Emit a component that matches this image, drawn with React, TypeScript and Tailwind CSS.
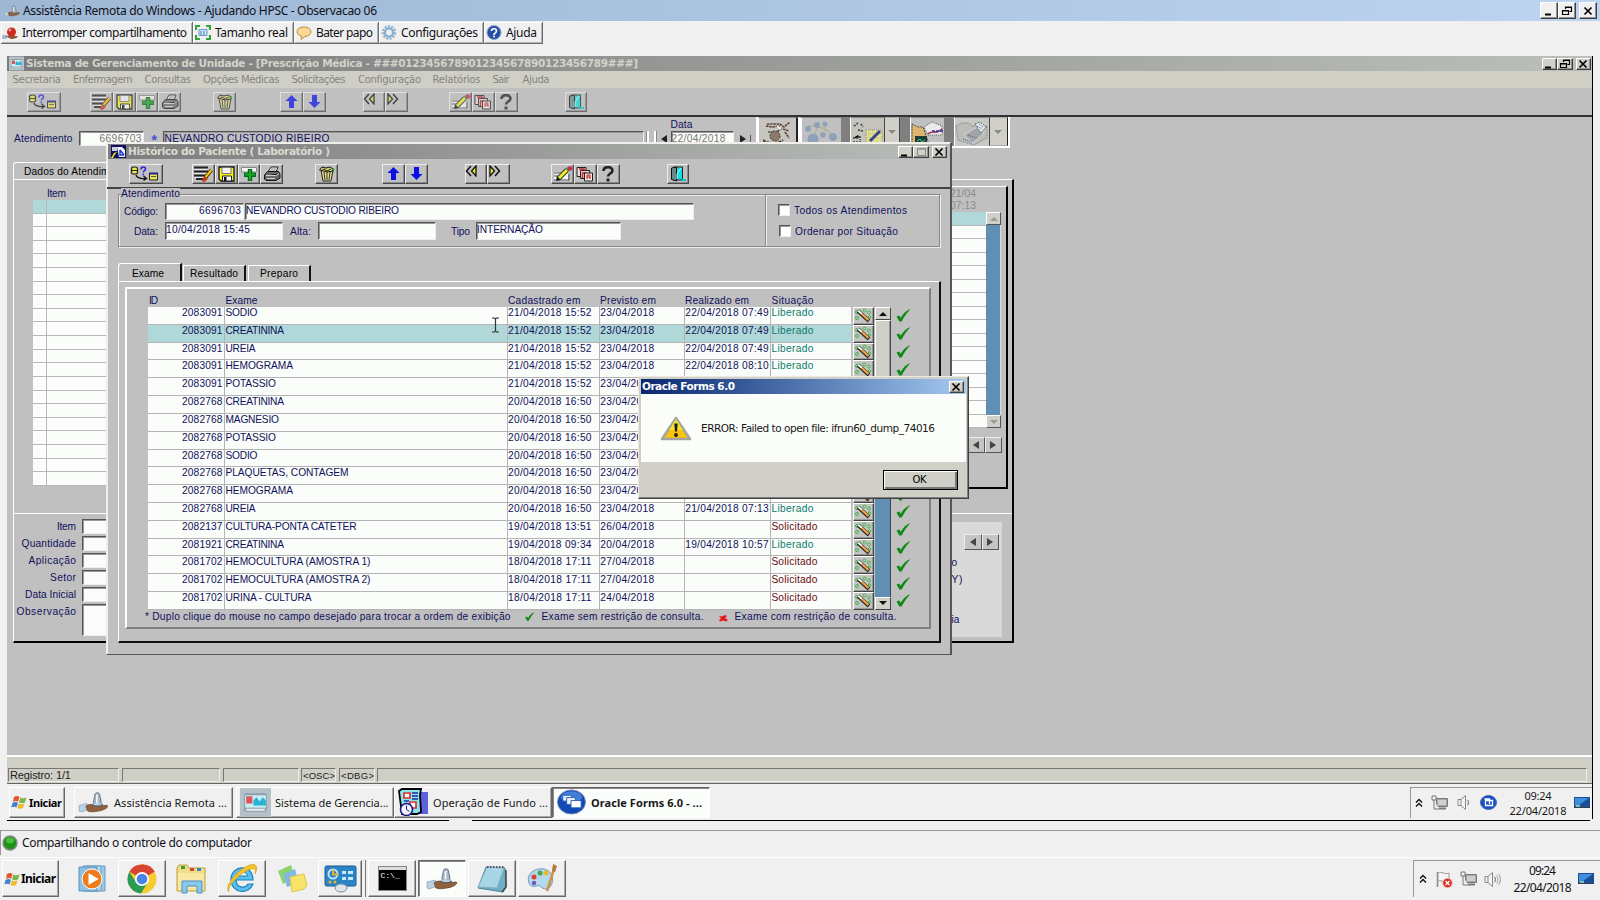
import { useLayoutEffect, useRef, useState } from "react";
import type { ReactNode } from "react";

const SYS = "font-['Liberation_Sans',sans-serif] text-[10.200px] leading-[11px] text-[#10105c]";
const VERD = "font-['DejaVu_Sans',Verdana,sans-serif]";
const SEG = "font-['Noto_Sans',sans-serif] text-[12px] leading-none text-[#101018]";

/* Spreads the letters of a label over a given width. */
function Fit({ w, children, className = "" }: { w: number; children: string; className?: string }) {
  const ref = useRef<HTMLSpanElement>(null);
  const [gap, setGap] = useState(0);
  useLayoutEffect(() => {
    if (!ref.current) return;
    const r = document.createRange();
    r.selectNodeContents(ref.current);
    const natural = r.getBoundingClientRect().width;
    setGap((w - natural) / Math.max(1, children.length - 1));
  }, [w, children]);
  return (
    <span ref={ref} className={"inline-block shrink-0 whitespace-pre " + className} style={{ width: w, letterSpacing: gap }}>
      {children}
    </span>
  );
}

/* ---------- toolbar icons ---------- */
const S = ({ w, h, vb, children }: { w: number; h: number; vb?: string; children: ReactNode }) => (
  <svg width={w} height={h} viewBox={vb ?? `0 0 ${w} ${h}`} className="block shrink-0">{children}</svg>
);
const IcQuery = () => (
  <S w={29} h={16}>
    <path d="M1.500 2.500c0-2 6-2 6 0v4c0 2-6 2-6 0z" fill="#e8e84a" stroke="#222" strokeWidth="1.200" /><path d="M1.500 4.500h6" stroke="#222" />
    <path d="M11 3.500c0-3.500 4.500-3 4.500-.5 0 1.800-2.200 1.500-2.200 3.500M12.500 8.500h1.600" fill="none" stroke="#2424e0" strokeWidth="1.500" />
    <path d="M6 9c1 3 4 4 10 3.500M13.500 10l3 2.500-3 2" fill="none" stroke="#111" strokeWidth="1.300" />
    <path d="M19.500 7.500h8v6.500h-8z" fill="#e8e84a" stroke="#222" /><path d="M19 7.500h9" stroke="#20208c" strokeWidth="2" /><path d="M21 10.500h5" stroke="#555" />
  </S>
);
const IcEdit = () => (
  <S w={20} h={16}>
    <path d="M1 1.500h14M1 5.500h14M1 9.500h12M3 13h8" stroke="#222" strokeWidth="1.900" /><path d="M1 3.500h14M1 7.500h13M2 11.500h9" stroke="#eee" />
    <path d="M18.500 4L12 12" stroke="#5a3008" strokeWidth="3.800" /><path d="M18.500 4L12.500 11" stroke="#f0c818" strokeWidth="2" />
    <path d="M8.500 15l2.500-4.500 4 2.500-3.500 3z" fill="#c83a18" />
  </S>
);
const IcSave = () => (
  <S w={17} h={16}>
    <path d="M1 1h15v14H3l-2-2z" fill="#f4f01c" stroke="#111" strokeWidth="1.300" /><path d="M4 1.500h9v6H4z" fill="#f4f4f4" stroke="#777" />
    <path d="M4.500 10h9v5h-9z" fill="#fff" stroke="#222" /><path d="M6 11h2.500v4H6z" fill="#111" />
  </S>
);
const IcInsert = () => (
  <S w={18} h={16}>
    <path d="M1.500 1.500h15v4.500h-15z" fill="#f4f4f4" stroke="#888" />
    <path d="M10 3v12M4 8.800h12" stroke="#056a14" strokeWidth="4.400" /><path d="M10 4v10M5 8.500h10" stroke="#18a828" strokeWidth="2" />
  </S>
);
const IcPrint = () => (
  <S w={18} h={16}>
    <path d="M5 6l3-5h7l-2 5z" fill="#f2f2f2" stroke="#222" /><path d="M8 3h5M7 5h5" stroke="#888" />
    <path d="M1.500 9l3-3.500h11L17 8v4l-4 2.500H3L1.500 13z" fill="#6a6a6a" stroke="#111" />
    <path d="M3 9.500h10l3-2M4 12.500h8" stroke="#ccc" />
  </S>
);
const IcTrash = () => (
  <S w={17} h={16}>
    <path d="M3 4h12l-2 11H5z" fill="#e6e08a" stroke="#222" /><path d="M6 6l1 8M9 6v8M12 6l-1 8" stroke="#333" />
    <path d="M1.500 4L4 1l4 1 4-1 3 2v2l-6 1z" fill="#d8d47a" stroke="#111" /><path d="M3 5l3-2 3 2 4-2" stroke="#222" fill="none" /><path d="M13 2l3 1-1 3" stroke="#1c8a1c" fill="none" />
  </S>
);
const IcUp = () => <S w={15} h={15}><path d="M7.500 1l6 6h-3.500v7h-5V7H1.500z" fill="#0a10e8" /></S>;
const IcDown = () => <S w={15} h={15}><path d="M7.500 14l6-6h-3.500V1h-5v7H1.500z" fill="#0a10e8" /></S>;
const IcPrev = () => <S w={14} h={12}><path d="M6 1L1.500 6 6 11" fill="none" stroke="#111" strokeWidth="1.500" /><path d="M11 1L6.500 6l4.500 5z" fill="#eaea30" stroke="#111" strokeWidth="1.300" /></S>;
const IcNext = () => <S w={14} h={12}><path d="M2 1l4.500 5L2 11z" fill="#eaea30" stroke="#111" strokeWidth="1.300" /><path d="M7 1l4.500 5L7 11" fill="none" stroke="#111" strokeWidth="1.500" /></S>;
const IcPencil = () => (
  <S w={20} h={16}>
    <path d="M1 6h14v9H1z" fill="#f6f6f6" /><path d="M1 7h8M1 10h5M1 14h15V8" stroke="#444" fill="none" />
    <path d="M5 13L14 4" stroke="#333" strokeWidth="5" /><path d="M6 12L14 4" stroke="#f0ec28" strokeWidth="3" />
    <path d="M3 15l1-4 3 3z" fill="#111" /><path d="M14 4l3-2" stroke="#2a9c40" strokeWidth="4" /><circle cx="17" cy="2.500" r="2.300" fill="#e0204c" />
  </S>
);
const IcStack = () => (
  <S w={18} h={16}>
    <path d="M1 1.500h9v9H1z" fill="#eed8d8" stroke="#222" /><path d="M3 3h5v6" stroke="#c01c1c" fill="none" strokeWidth="1.500" />
    <path d="M4.500 4.500h9v8h-9z" fill="#eed8d8" stroke="#222" /><path d="M6.500 12V7h4" stroke="#c01c1c" fill="none" strokeWidth="1.500" />
    <path d="M8.500 7h8v8h-8z" fill="#f6e4e4" stroke="#222" /><path d="M11 13V9h3v4M11 11h3" stroke="#c01c1c" fill="none" />
  </S>
);
const IcHelp = () => <S w={14} h={16}><path d="M2.500 5C2.500 0 11.500 0 11.500 4.500c0 3-4.500 3-4.500 6" fill="none" stroke="#222" strokeWidth="2.600" /><path d="M5.500 12.500h3v3h-3z" fill="#222" /></S>;
const IcDoor = () => (
  <S w={16} h={16}>
    <path d="M3.500 1h9v13h-9z" fill="#12dfe2" stroke="#222" /><path d="M1.500 2l5-1v14l-5-1.500z" fill="#6a8a8a" stroke="#111" />
    <path d="M11 2l-4 6v5" stroke="#bff" fill="none" /><path d="M12 14h4" stroke="#0cc" strokeWidth="2" />
  </S>
);

function Btn({ wide, children }: { wide?: boolean; children: ReactNode }) {
  return <div className={(wide ? "w-[34px]" : "w-[22.800px]") + " flex h-[20px] shrink-0 items-center justify-center border border-t-[#ededed] border-l-[#ededed] border-r-[#4a4a4a] border-b-[#4a4a4a] shadow-[inset_-1px_-1px_0_#8a8a8a]"}>{children}</div>;
}

function ToolStrip() {
  return (
    <div className="flex items-center">
      <Btn wide><div className="-ml-[3px]"><IcQuery /></div></Btn>
      <div className="ml-[29px] flex"><Btn><IcEdit /></Btn><Btn><IcSave /></Btn><Btn><IcInsert /></Btn><Btn><IcPrint /></Btn></div>
      <div className="ml-[32px] flex"><Btn><IcTrash /></Btn></div>
      <div className="ml-[44px] flex"><Btn><IcUp /></Btn><Btn><IcDown /></Btn></div>
      <div className="ml-[37px] flex"><Btn><div className="-mt-[5px] -ml-[7px]"><IcPrev /></div></Btn><Btn><div className="-mt-[5px] -ml-[7px]"><IcNext /></div></Btn></div>
      <div className="ml-[41px] flex"><Btn><IcPencil /></Btn><Btn><IcStack /></Btn><Btn><IcHelp /></Btn></div>
      <div className="ml-[47px] flex"><Btn><IcDoor /></Btn></div>
    </div>
  );
}

/* ---------- window buttons ---------- */
const WinGlyph = ({ k, dim }: { k: "min" | "restore" | "max" | "close"; dim?: boolean }) => (
  <S w={12} h={10}>
    {k === "min" && <path d="M2 8.500h6" stroke="#000" strokeWidth="2" />}
    {k === "restore" && <path d="M4.500 3V1h6v4.500h-2M4 1.500h7M1.500 4.500h6v4h-6zM1 5h7" fill="none" stroke="#000" strokeWidth="1.200" />}
    {k === "max" && <path d="M2.500 1.500h8v7h-8zM2 2h9" fill="none" stroke={dim ? "#8a8a86" : "#000"} />}
    {k === "close" && <path d="M2.500 1.500l7 7M9.500 1.500l-7 7" stroke="#000" strokeWidth="1.700" />}
  </S>
);
function WinBtn({ k, big, dim }: { k: "min" | "restore" | "max" | "close"; big?: boolean; dim?: boolean }) {
  return (
    <div className={(big ? "h-[17px] w-[18px] bg-[#f0f0f0]" : "h-[12px] w-[15.500px] bg-[#d0cfc8]") + " flex items-center justify-center border border-t-white border-l-white border-r-[#404040] border-b-[#404040] shadow-[inset_-1px_-1px_0_#909090]"}>
      <WinGlyph k={k} dim={dim} />
    </div>
  );
}

/* ---------- shared application icons ---------- */
const AppIcon = ({ s }: { s: number }) => (
  <S w={s} h={s} vb="0 0 30 28">
    <rect width="30" height="28" fill="#b4c2c8" /><rect x="4" y="5" width="22" height="18" rx="2" fill="#8d9da8" />
    <rect x="5" y="7" width="20" height="12" fill="#c8f0f4" /><rect x="6" y="8" width="6" height="7" fill="#e2525e" />
    <path d="M13 17v-5l3-3 3 4 3-4 3 3v5z" fill="#28b4d0" /><path d="M6 21h18" stroke="#e8eef2" strokeWidth="2" />
  </S>
);
const HandIcon = ({ w, h }: { w: number; h: number }) => (
  <S w={w} h={h} vb="0 0 32 22">
    <path d="M1 14l8-2 3 6-9 3-2-1z" fill="#b6d2e4" stroke="#7c98ac" strokeWidth=".6" />
    <path d="M8 15c3-3 8-2 10 0l12-1c3 1-2 5-9 6-5 1-9 1-11 0z" fill="#94603c" stroke="#5e3a20" strokeWidth=".7" />
    <path d="M17.500 3c0-3 5-3 5 0l1.500 7c1 4-9 4-8 0z" fill="#a9b6c4" stroke="#4e5f70" strokeWidth=".8" /><path d="M19.500 3v9" stroke="#f2f6fa" strokeWidth="1.800" />
    <path d="M14 13.500c0-2.500 12-2.500 12 0s-12 2.500-12 0z" fill="#53657a" /><path d="M15.500 12.800c0-1.700 9-1.700 9 0s-9 1.600-9 0z" fill="#c4ced8" />
  </S>
);
const Flag = () => (
  <S w={17} h={16}>
    <path d="M3 3c2-1.500 4-1.500 5.500 0L7 8C5.500 6.800 4 6.800 2 8z" fill="#e4562c" />
    <path d="M9.500 3.500c2 1.200 4 1 6 0L14 8.500c-2 1-4 1-6 0z" fill="#7ab648" />
    <path d="M1.600 9c2-1.200 4-1.200 5.300 0l-1.500 4.500C4 12.500 2 12.500.3 13.500z" fill="#3f7fd0" />
    <path d="M7.800 9.500c2 1 4 1 5.800 0L12 14c-2 1-4 1-5.600 0z" fill="#f0b82c" />
  </S>
);
const Net = () => (
  <S w={17} h={16}>
    <path d="M5.500 3.500h11v8h-11z" fill="#a8a8a8" stroke="#787878" /><path d="M7 5h8v5H7z" fill="#cfcfcf" />
    <path d="M8 13.500h7" stroke="#787878" strokeWidth="2" /><path d="M1 1h4v4H1zM3 5v9h5" fill="#f0f0f0" stroke="#777" />
  </S>
);
const Speaker = ({ waves }: { waves: number }) => (
  <S w={17} h={15}>
    <path d="M1 4.500h3l4.500-4v14l-4.500-4H1z" fill="#f4f4f4" stroke="#888" /><path d="M4 4.500v6" stroke="#888" />
    <path d="M10.500 5c1.400 1.300 1.400 3.700 0 5" fill="none" stroke="#888" strokeWidth="1.200" />
    {waves > 1 && <path d="M12.500 3.500c2 2 2 6 0 8M14.500 2c2.500 3 2.500 8 0 11" fill="none" stroke="#999" />}
  </S>
);
const Monitor = () => <S w={16} h={12}><path d="M0 0h16v10H0z" fill="#1b4e96" /><path d="M1 1h14L5 8 1 9z" fill="#3f8fdc" /><path d="M0 10.500h16" stroke="#304050" /><path d="M2 9h4" stroke="#9fe0b0" strokeWidth="1.500" /></S>;
const Chevrons = () => <S w={8} h={10}><path d="M1 4.500L4 1.500l3 3M1 8.500l3-3 3 3" fill="none" stroke="#111" strokeWidth="1.400" /></S>;
const FormsIcon = ({ w, h }: { w: number; h: number }) => (
  <S w={w} h={h} vb="0 0 30 26">
    <ellipse cx="15" cy="13" rx="14.500" ry="12.500" fill="#1248b4" stroke="#7c92b8" /><ellipse cx="15" cy="8" rx="11" ry="6" fill="#5a96e4" opacity=".7" />
    <path d="M6 6h9v6H6z" fill="#e8f0fc" stroke="#2c60b8" strokeWidth="1" /><path d="M10 8.500h9v7h-9z" fill="#f2f6fe" stroke="#2c60b8" strokeWidth="1" />
    <path d="M14.500 11.500H25v7.500H14.500z" fill="#fff" stroke="#2c60b8" strokeWidth="1" />
  </S>
);
const FormsIconSmall = () => (
  <S w={17} h={15}>
    <ellipse cx="8.500" cy="7.500" rx="8" ry="7" fill="#1a50c4" stroke="#4468b0" /><path d="M4.500 4h5v5M5.500 5.500h7v5h-7z" fill="none" stroke="#fff" strokeWidth="1.300" />
  </S>
);
const Check = ({ w, h }: { w: number; h: number }) => <S w={w} h={h} vb="0 0 15 14"><path d="M0 8l3-1 1.500 2.500C7 5 10 2 15 0 11 4 8 9 5.500 13.500H3z" fill="#0c8a12" /></S>;
const Tri = ({ d, c = "#111" }: { d: "u" | "d" | "l" | "r"; c?: string }) => (
  <S w={8} h={8}><path d={d === "u" ? "M0 6l4-4 4 4z" : d === "d" ? "M0 2l4 4 4-4z" : d === "l" ? "M7 0v8L1 4z" : "M1 0v8l6-4z"} fill={c} /></S>
);
const Wand = () => (
  <S w={18} h={15}>
    <g fill="none" stroke="#3cb84c" strokeWidth="1"><circle cx="3" cy="4" r="1.500" /><circle cx="10.500" cy="2.500" r="1.500" /><circle cx="15" cy="4.500" r="1.500" /><circle cx="3" cy="10" r="1.500" /><circle cx="15.500" cy="9" r="1.200" /></g>
    <path d="M4 3l11 10" stroke="#33302a" strokeWidth="3.800" /><path d="M4.300 2.800L8 6" stroke="#fff" strokeWidth="1.800" /><path d="M8 6l6.500 6" stroke="#f2a448" strokeWidth="2.300" />
  </S>
);

/* ---------- outer session window ---------- */
function OuterTop() {
  const b = "flex h-[22px] items-center border-r border-b border-r-[#6c6c6c] border-b-[#6c6c6c] shadow-[inset_1px_1px_0_#fff,inset_-1px_-1px_0_#b4b4b4]";
  return (
    <>
      <header className="flex h-[21px] items-center justify-between bg-linear-to-r from-[#9db7d4] to-[#bcd4ef] pr-[3px] pl-[4px]">
        <div className="flex items-center gap-[3px]"><HandIcon w={16} h={12} /><Fit w={354} className={SEG}>Assistência Remota do Windows - Ajudando HPSC - Observacao 06</Fit></div>
        <div className="flex"><WinBtn k="min" big /><WinBtn k="restore" big /><div className="ml-[3px]"><WinBtn k="close" big /></div></div>
      </header>
      <nav className="flex h-[35px] bg-[#f0f0f0] pt-px pl-px">
        <div className={b + " w-[192px] gap-[3px] pl-px"}>
          <S w={17} h={14}><path d="M0 9h5v4H0z" fill="#a4bfd6" /><path d="M3 10l12 0c2 1-2 3-6 3z" fill="#8a5634" /><circle cx="9.500" cy="6" r="4.500" fill="#cc2a22" /><circle cx="8" cy="4" r="1.500" fill="#f09088" /></S>
          <Fit w={165} className={SEG}>Interromper compartilhamento</Fit>
        </div>
        <div className={b + " w-[101px] gap-[4px] pl-[2px]"}>
          <S w={16} h={15}><path d="M1 5V1h4M11 1h4v4M15 10v4h-4M5 14H1v-4" fill="none" stroke="#30a838" strokeWidth="2.200" /><path d="M4 4.500h8v6H4z" fill="#cfe4f8" stroke="#6c9cc8" /><path d="M6 6v4M9 6v4" stroke="#4878b8" /></S>
          <Fit w={73} className={SEG}>Tamanho real</Fit>
        </div>
        <div className={b + " w-[85px] gap-[4px] pl-[2px]"}>
          <S w={16} h={14}><path d="M8 1c9 0 9 9 1 9.500L5 13.500l.5-3.500C-1 8.500-.5 1 8 1z" fill="#f9d894" stroke="#c08c38" /></S>
          <Fit w={57} className={SEG}>Bater papo</Fit>
        </div>
        <div className={b + " w-[105px] gap-[4px] pl-[2px]"}>
          <S w={16} h={15}><circle cx="8" cy="7.500" r="5.800" fill="none" stroke="#8db4d2" strokeWidth="3" strokeDasharray="2 1.200" /><circle cx="8" cy="7.500" r="4" fill="none" stroke="#88aecd" strokeWidth="2.200" /></S>
          <Fit w={77} className={SEG}>Configurações</Fit>
        </div>
        <div className={b + " w-[59px] gap-[4px] pl-[2px]"}>
          <S w={16} h={15}><circle cx="8" cy="7.500" r="7" fill="#2450a8" stroke="#8ea4cc" /><path d="M5.500 6c0-3 5-3 5 0 0 2-2.500 1.700-2.500 4" fill="none" stroke="#fff" strokeWidth="1.700" /><circle cx="8" cy="11.500" r="1" fill="#fff" /></S>
          <Fit w={31} className={SEG}>Ajuda</Fit>
        </div>
      </nav>
    </>
  );
}

/* ---------- background application ---------- */
const MENU: [string, number, number][] = [
  ["Secretaria", 48.5, 12], ["Enfermagem", 59.5, 12], ["Consultas", 46.5, 12], ["Opções Médicas", 76.5, 12], ["Solicitações", 54, 12.5],
  ["Configuração", 63, 11.5], ["Relatórios", 48, 12], ["Sair", 17, 13], ["Ajuda", 27, 0],
];
const SUNK = "border border-t-[#555] border-l-[#555] border-r-[#eee] border-b-[#eee] shadow-[inset_1px_1px_0_#999]";

function TopButtons() {
  const cell = "flex h-[29px] items-start justify-center overflow-hidden border-t border-l border-t-[#888] border-l-white pt-[3px]";
  const bar = "h-[29px] bg-[#7f7f7f]";
  return (
    <div className="flex h-[31px] w-[254px] border-r-2 border-b-2 border-white border-l-2">
      <div className={cell + " w-[40px] border-r-2 border-r-[#222] bg-[#c6c5c0]"}>
        <S w={28} h={26}>
          <path d="M4 3h13l4 3 6-5M3 5l6 1 8-1M5 11h9l5-4M20 8l6 2M22 11l4 6" stroke="#5c4438" strokeWidth="1.600" strokeDasharray="2.500 .7" fill="none" />
          <circle cx="12" cy="15" r="5" fill="#8a7a6c" stroke="#4a3e34" strokeDasharray="2 1" /><path d="M0 19c6 4 14 4 20 0M2 23h14" stroke="#4a3e34" strokeWidth="2" strokeDasharray="3 1" fill="none" /><path d="M14 5l4 3" stroke="#f4f0ea" strokeWidth="2" />
        </S>
      </div>
      <div className={cell + " w-[43px] border-l-4"}>
        <S w={34} h={24}><path d="M4 5h8l9 3 8 6M14 5l-5 12M21 3v7" stroke="#b0b498" strokeWidth="1.500" fill="none" /><g fill="#8fa0b8"><circle cx="4" cy="8" r="3" /><circle cx="13" cy="4" r="3" /><circle cx="21" cy="3" r="2.500" /><circle cx="9" cy="18" r="5.500" /><circle cx="19" cy="14" r="2.800" /><circle cx="29" cy="16" r="4" /></g></S>
      </div>
      <div className={bar + " w-[9px]"} />
      <div className={cell + " w-[34px] bg-[#c4c4bc]"}>
        <S w={32} h={24}><path d="M15 9h16v14H15z" fill="#e4e290" stroke="#888" strokeDasharray="1 1" /><path d="M18 9v14M22 9v14M26 9v14M15 13h16M15 17h16" stroke="#c4c28c" strokeWidth=".6" /><path d="M29 10L19 20" stroke="#38468c" strokeWidth="3" /><path d="M3 5l4-3M10 3l2 3M7 9l5 1M2 17h6l-1-3M2 21h9M9 15v4" stroke="#444" strokeWidth="1.600" strokeDasharray="2 1" /></S>
      </div>
      <div className="flex h-[29px] w-[16px] items-center justify-center border border-x-[#444] border-y-[#aaa] bg-[#d0cfc8]"><Tri d="d" c="#888" /></div>
      <div className={bar + " w-[10px]"} />
      <div className={cell + " w-[34px]"}>
        <S w={32} h={25}><path d="M1 3l6 3h5l6 17H1z" fill="#dcb670" stroke="#444" strokeDasharray="2 1" /><path d="M13 6l8-5 10 4v9H17z" fill="#eceaea" stroke="#555" strokeDasharray="1 1" /><path d="M17 13c4-5 8 2 14-5" stroke="#a02050" strokeWidth="1.300" fill="none" /><path d="M21 10h11" stroke="#2838a8" strokeWidth="1.600" strokeDasharray="3 1" /><path d="M4 15h12v9H4z" fill="#1e3b36" /><path d="M6 20l3-2 2 3 3-2" stroke="#3fd8a0" fill="none" /></S>
      </div>
      <div className={bar + " w-[10px]"} />
      <div className={cell + " w-[35px] bg-[#c8c8c4]"}>
        <S w={34} h={25}><path d="M1 5l6-3h7l3 3h15v12l-13 7L3 19z" fill="#bcbcbb" stroke="#777" strokeDasharray="1 1" /><path d="M9 14l13-8 7 6-11 10z" fill="#a2a6a8" stroke="#e4e4e4" strokeWidth=".7" /><path d="M20 3l5-2 6 5-5 6z" fill="#e4e8ec" stroke="#5a6a80" strokeDasharray="2 1" /><path d="M22 5l5 3M24 3l4 3M13 14l9 3M8 18l9 3" stroke="#4a6080" strokeDasharray="1 1" /></S>
      </div>
      <div className="flex h-[29px] flex-1 items-center justify-center border border-l-[#444] border-r-[#222] border-y-[#aaa] bg-[#d0cfc8]"><Tri d="d" c="#888" /></div>
    </div>
  );
}

function RecordBar() {
  return (
    <div className="flex h-[45px] items-start pl-[7px]">
      <Fit w={58.5} className={SYS + " mt-[16px]"}>Atendimento</Fit>
      <div className={SUNK + " mt-[14px] ml-[6px] flex h-[15px] w-[65px] items-center justify-end bg-[#fafdf9] pr-px"}><Fit w={42} className={SYS + " !text-[#777]"}>6696703</Fit></div>
      <span className="mt-[16px] ml-[8px] w-[6px] font-['Liberation_Sans',sans-serif] text-[14px] leading-none font-bold text-[#4a4ad0]">*</span>
      <div className={SUNK + " mt-[14px] ml-[5px] flex h-[15px] w-[481px] items-center pl-px"}><Fit w={165} className={SYS}>NEVANDRO CUSTODIO RIBEIRO</Fit></div>
      <div className="mt-[14px] ml-[3px] h-[15px] w-[9px] border-x-2 border-white shadow-[-1px_0_0_#888,1px_0_0_#888]" />
      <div className="mt-[18px] ml-[4px] w-[11px]"><Tri d="l" c="#222" /></div>
      <div className="flex w-[64px] flex-col pt-[2px]">
        <Fit w={22} className={SYS}>Data</Fit>
        <div className={SUNK + " mt-px flex h-[15px] w-[63px] items-center bg-[#fafdf9]"}><Fit w={54} className={SYS + " !text-[#777]"}>22/04/2018</Fit></div>
      </div>
      <div className="mt-[18px] ml-[4px] flex h-[12px] w-[12px] border-r border-[#555]"><Tri d="r" c="#222" /></div>
      <div className="ml-[5px]"><TopButtons /></div>
    </div>
  );
}

const GRID_ROWS = Array.from({ length: 21 }, (_, i) => i);
const FORM: [string, number, string][] = [["Item", 19, "h-[15px]"], ["Quantidade", 54.5, "h-[15px]"], ["Aplicação", 47.5, "h-[15px]"], ["Setor", 26, "h-[15px]"], ["Data Inicial", 51, "h-[15px]"], ["Observação", 59.5, "h-[32px]"]];

function NavPair() {
  const c = "flex h-[16px] w-[17.500px] items-center justify-center border border-t-[#eee] border-l-[#eee] border-r-[#555] border-b-[#555] bg-[#c4c4c2]";
  return <div className="flex"><div className={c}><Tri d="l" c="#444" /></div><div className={c}><Tri d="r" c="#444" /></div></div>;
}

function BackPanels() {
  return (
    <div className="ml-[6px] w-[1001px]">
      <div className="flex h-[17px] w-[300px] items-center rounded-tl-[3px] border-t border-l border-white pl-[10px]"><Fit w={106} className={SYS + " !text-black"}>Dados do Atendimento</Fit></div>
      <div className="flex h-[464px] flex-col border-t border-r-2 border-b-2 border-l border-t-white border-r-black border-b-black border-l-white">
        <div className="flex h-[334px] justify-between border-b border-white">
          <div className="pt-[8px] pl-[19px]">
            <div className="flex h-[12px] pl-[14px]"><Fit w={19} className={SYS}>Item</Fit></div>
            <div className="w-[400px]">
              {GRID_ROWS.map((i) => (
                <div key={i} className={(i === 0 ? "bg-[#b0d8d8]" : "bg-[#fafdf9]") + " flex h-[13.620px] border-b border-[#b8b8b8]"}><div className="w-[14px] border-r border-[#b8b8b8]" /></div>
              ))}
            </div>
          </div>
          <div className="mt-[6px] mr-[4px] h-[303px] w-[100px] border-t border-r-2 border-t-white border-r-black border-b-2 border-b-black">
            <div className="flex h-[25px] flex-col items-start gap-px pt-px pl-[42px]">
              <Fit w={26} className={SYS + " !text-[#8a8a8a]"}>21/04</Fit><Fit w={26} className={SYS + " !text-[#8a8a8a]"}>07:13</Fit>
            </div>
            <div className="flex h-[216px]">
              <div className="w-[78px]">
                {GRID_ROWS.slice(0, 16).map((i) => (
                  <div key={i} className={(i === 0 ? "bg-[#b0d8d8]" : "bg-[#fafdf9]") + " h-[13.500px] border-b border-[#b8b8b8]"} />
                ))}
              </div>
              <div className="flex w-[15px] flex-col bg-[#5f8fb2]">
                <div className="flex h-[13px] items-center justify-center border border-t-white border-l-white border-r-[#555] border-b-[#555] bg-[#d0cfc8]"><Tri d="u" c="#999" /></div>
                <div className="flex-1 border-r border-[#ddd]" />
                <div className="flex h-[13px] items-center justify-center border border-t-white border-l-white border-r-[#555] border-b-[#555] bg-[#d0cfc8]"><Tri d="d" c="#999" /></div>
              </div>
            </div>
            <div className="mt-[9px] flex justify-end pr-[4px]"><NavPair /></div>
          </div>
        </div>
        <div className="flex flex-1 justify-between">
          <div className="flex flex-col gap-[2px] pt-[5px]">
            {FORM.map(([t, w, h]) => (
              <div key={t} className={h + " flex"}>
                <div className="mt-[2px] flex w-[62px] justify-end"><Fit w={w} className={SYS}>{t}</Fit></div>
                <div className={SUNK + " ml-[5.500px] w-[200px] bg-[#fafdf9]"} />
              </div>
            ))}
          </div>
          <div className="mt-[8px] mr-[10px] flex h-[115px] w-[100px] flex-col bg-[#d9d9d9]">
            <div className="mt-[12px] mr-[3px] flex justify-end"><NavPair /></div>
            <div className="mt-[7px] flex pl-[49.500px]"><Fit w={6} className={SYS}>o</Fit></div>
            <div className="mt-[6px] flex pl-[49.500px]"><Fit w={11} className={SYS}>Y)</Fit></div>
            <div className="mt-[29px] flex pl-[49.500px]"><Fit w={8} className={SYS}>ia</Fit></div>
          </div>
        </div>
      </div>
    </div>
  );
}

function StatusBar() {
  const c = "flex h-[14px] items-center border border-t-[#777] border-l-[#777] border-r-[#eee] border-b-[#eee] pt-px pl-px";
  const t = "font-['Liberation_Sans',sans-serif] text-[11px] leading-none text-[#1c1c1c]";
  return (
    <div className="h-[29px] border-t-2 border-b border-white border-b-[#666] bg-[#d0cfc6] pt-[11px] pl-px">
      <div className="flex">
        <div className={c + " w-[111px]"}><Fit w={61} className={t}>Registro: 1/1</Fit></div>
        <div className={c + " ml-[3px] w-[98px]"} />
        <div className={c + " ml-[3px] w-[76px]"} />
        <div className={c + " ml-[2px] w-[35px]"}><Fit w={32} className={t + " !text-[9.500px]"}>{"<OSC>"}</Fit></div>
        <div className={c + " ml-[3px] w-[36px]"}><Fit w={33} className={t + " !text-[9.500px]"}>{"<DBG>"}</Fit></div>
        <div className={c + " ml-[2px] w-[1210px]"} />
      </div>
    </div>
  );
}

/* ---------- patient history window ---------- */
type Row = [string, string, string, string, string, "" | "Liberado" | "Solicitado"];
const ROWS: Row[] = [
  ["2083091", "SODIO", "21/04/2018 15:52", "23/04/2018", "22/04/2018 07:49", "Liberado"],
  ["2083091", "CREATININA", "21/04/2018 15:52", "23/04/2018", "22/04/2018 07:49", "Liberado"],
  ["2083091", "UREIA", "21/04/2018 15:52", "23/04/2018", "22/04/2018 07:49", "Liberado"],
  ["2083091", "HEMOGRAMA", "21/04/2018 15:52", "23/04/2018", "22/04/2018 08:10", "Liberado"],
  ["2083091", "POTASSIO", "21/04/2018 15:52", "23/04/2018", "", ""],
  ["2082768", "CREATININA", "20/04/2018 16:50", "23/04/2018", "", ""],
  ["2082768", "MAGNESIO", "20/04/2018 16:50", "23/04/2018", "", ""],
  ["2082768", "POTASSIO", "20/04/2018 16:50", "23/04/2018", "", ""],
  ["2082768", "SODIO", "20/04/2018 16:50", "23/04/2018", "", ""],
  ["2082768", "PLAQUETAS, CONTAGEM", "20/04/2018 16:50", "23/04/2018", "", ""],
  ["2082768", "HEMOGRAMA", "20/04/2018 16:50", "23/04/2018", "", ""],
  ["2082768", "UREIA", "20/04/2018 16:50", "23/04/2018", "21/04/2018 07:13", "Liberado"],
  ["2082137", "CULTURA-PONTA CATETER", "19/04/2018 13:51", "26/04/2018", "", "Solicitado"],
  ["2081921", "CREATININA", "19/04/2018 09:34", "20/04/2018", "19/04/2018 10:57", "Liberado"],
  ["2081702", "HEMOCULTURA (AMOSTRA 1)", "18/04/2018 17:11", "27/04/2018", "", "Solicitado"],
  ["2081702", "HEMOCULTURA (AMOSTRA 2)", "18/04/2018 17:11", "27/04/2018", "", "Solicitado"],
  ["2081702", "URINA - CULTURA", "18/04/2018 17:11", "24/04/2018", "", "Solicitado"],
];
const NAME_W: Record<string, number> = {
  SODIO: 32, CREATININA: 58.5, UREIA: 30, HEMOGRAMA: 67.5, POTASSIO: 50.5, MAGNESIO: 53.5, "PLAQUETAS, CONTAGEM": 123,
  "CULTURA-PONTA CATETER": 131, "HEMOCULTURA (AMOSTRA 1)": 145, "HEMOCULTURA (AMOSTRA 2)": 145, "URINA - CULTURA": 86,
};

function ExamTable() {
  const col = "shrink-0 border-r border-[#b4b4b4]";
  return (
    <div className="flex">
      <div className="w-[703px]">
        {ROWS.map((r, i) => (
          <div key={i} className={(i === 1 ? "bg-[#b0d8d8]" : "bg-[#fafdf9]") + " flex h-[17.820px] border-b border-[#b4b4b4] " + SYS}>
            <div className={col + " flex w-[77px] justify-end pr-[1.500px]"}><Fit w={40.5}>{r[0]}</Fit></div>
            <div className={col + " w-[282.500px] pl-[.5px]"}><Fit w={NAME_W[r[1]]}>{r[1]}</Fit></div>
            <div className={col + " w-[92.300px] pl-[.5px]"}><Fit w={83.5}>{r[2]}</Fit></div>
            <div className={col + " w-[85.400px] pl-[.5px]"}><Fit w={54}>{r[3]}</Fit></div>
            <div className={col + " w-[86.200px]"}>{r[4] && <Fit w={83.5}>{r[4]}</Fit>}</div>
            {r[5] && <Fit w={r[5] === "Liberado" ? 42 : 46} className={r[5] === "Liberado" ? "text-[#0a7a6c]" : "text-[#6c0c14]"}>{r[5]}</Fit>}
          </div>
        ))}
      </div>
      <div className="ml-[1.500px] w-[21px]">
        {ROWS.map((_, i) => (
          <div key={i} className="flex h-[17.820px] items-center justify-center border border-t-white border-l-white border-r-[#444] border-b-[#444] bg-[#c4c4c2] shadow-[inset_-1px_-1px_0_#999]"><Wand /></div>
        ))}
      </div>
      <div className="ml-[1.500px] flex w-[15.500px] flex-col bg-[#5f8fb2]">
        <div className="flex h-[13px] items-center justify-center border border-t-white border-l-white border-r-[#444] border-b-[#444] bg-[#d0cfc8]"><Tri d="u" /></div>
        <div className="h-[150px] border border-t-white border-l-white border-r-[#444] border-b-[#444] bg-[#d0cfc8] shadow-[inset_-1px_0_0_#999]" />
        <div className="flex-1 border-r border-[#444]" />
        <div className="flex h-[13px] items-center justify-center border border-t-white border-l-white border-r-[#444] border-b-[#444] bg-[#d0cfc8]"><Tri d="d" /></div>
      </div>
      <div className="ml-[5px]">{ROWS.map((_, i) => <div key={i} className="flex h-[17.820px] items-center"><Check w={15} h={13} /></div>)}</div>
    </div>
  );
}

function Field({ cls, w, v }: { cls: string; w?: number; v?: string }) {
  return <div className={SUNK + " flex bg-[#fafdf9] pt-px " + cls}>{v && <Fit w={w ?? 40} className={SYS}>{v}</Fit>}</div>;
}

function HistoryWindow() {
  const tab = "flex h-[16px] items-center justify-center border-t border-r-2 border-l border-t-white border-l-white border-r-[#111]";
  return (
    <section className="absolute top-[142px] left-[106px] flex h-[513px] w-[846px] flex-col border border-t-[#eee] border-r-2 border-l-[#eee] border-r-[#555] border-b-[#555] bg-[#c0c0c0] shadow-[inset_1px_1px_0_#f4f2e8]">
      <div className="mt-px ml-px flex h-[15px] items-center justify-between bg-linear-to-r from-[#7d7d7d] to-[#b9bdb9] pr-[3px] pl-[3px]">
        <div className="flex items-center gap-[2px]">
          <S w={15} h={13}><path d="M0 0h15v13H0z" fill="#101060" /><path d="M1 2h5v4H1z" fill="#c8d0e0" /><path d="M6 2h5l3 3v7H8z" fill="#f0f4fc" /><path d="M9 5l4 5M9 5v5l4 0" stroke="#2038c8" strokeWidth="1.500" fill="none" /><path d="M0 13l3-5 3-1-3 4-1 2z" fill="#f0e020" /></S>
          <Fit w={202} className={VERD + " text-[10.500px] leading-none font-bold text-[#dcdad2]"}>Histórico do Paciente ( Laboratório )</Fit>
        </div>
        <div className="flex"><WinBtn k="min" /><WinBtn k="max" dim /><div className="ml-[3px]"><WinBtn k="close" /></div></div>
      </div>
      <div className="flex h-[30px] items-center border-b-2 border-[#444] pt-px pl-[22px]"><ToolStrip /></div>
      <div className="mt-[5px] ml-[11px] flex h-[53px] w-[822px] border border-[#888] shadow-[inset_1px_1px_0_#eee,1px_1px_0_#eee]">
        <div className="w-[647px] border-r border-[#888] pl-[2px]">
          <div className="-mt-[7px] flex h-[15px] items-start"><Fit w={59} className={SYS + " bg-[#c0c0c0]"}>Atendimento</Fit></div>
          <div className="flex h-[19px]">
            <Fit w={34} className={SYS + " mt-[3px] ml-[3px]"}>Código:</Fit>
            <Field cls="ml-[7px] w-[79px] h-[17px] justify-end pr-[2px]" w={42} v="6696703" />
            <Field cls="ml-px w-[449px] h-[17px]" w={153} v="NEVANDRO CUSTODIO RIBEIRO" />
          </div>
          <div className="flex h-[18px]">
            <Fit w={24} className={SYS + " mt-[4px] ml-[13px]"}>Data:</Fit>
            <Field cls="ml-[7px] w-[118px] h-[18px]" w={84} v="10/04/2018 15:45" />
            <Fit w={21} className={SYS + " mt-[4px] ml-[7px]"}>Alta:</Fit>
            <Field cls="ml-[7px] w-[118px] h-[18px]" />
            <Fit w={19} className={SYS + " mt-[4px] ml-[15px]"}>Tipo</Fit>
            <Field cls="ml-[6px] w-[145px] h-[18px]" w={66} v="INTERNAÇÃO" />
          </div>
        </div>
        <div className="flex flex-col gap-[9px] pt-[9px] pl-[12px] shadow-[inset_1px_0_0_#eee]">
          <div className="flex items-center gap-[4px]"><div className={SUNK + " h-[12px] w-[12px] bg-white"} /><Fit w={113} className={SYS}>Todos os Atendimentos</Fit></div>
          <div className="flex items-center gap-[4px] pl-px"><div className={SUNK + " h-[12px] w-[12px] bg-white"} /><Fit w={103} className={SYS}>Ordenar por Situação</Fit></div>
        </div>
      </div>
      <div className="mt-[16px] ml-[11px] flex h-[18px] items-end">
        <div className="flex h-[18px] w-[64px] items-center justify-center rounded-tl-[3px] border-t border-r-2 border-l border-t-white border-r-[#111] border-l-white pt-px pr-[3px]"><Fit w={32} className={SYS + " !text-black"}>Exame</Fit></div>
        <div className={tab + " ml-px w-[63px]"}><Fit w={48} className={SYS + " !text-black"}>Resultado</Fit></div>
        <div className={tab + " ml-[2px] w-[63px]"}><Fit w={38} className={SYS + " !text-black"}>Preparo</Fit></div>
      </div>
      <div className="ml-[11px] h-[362px] w-[823px] border-t border-r-2 border-b-2 border-l border-t-white border-r-[#111] border-b-[#111] border-l-white">
        <div className="mt-[5px] ml-[6px] h-[342px] w-[806px] border-2 border-t-white border-r-[#808080] border-b-[#808080] border-l-white">
          <div className="flex h-[18px] items-end pb-px pl-[21px]">
            <div className="flex w-[77.500px] pl-px"><Fit w={9} className={SYS}>ID</Fit></div>
            <div className="flex w-[282.500px]"><Fit w={32} className={SYS}>Exame</Fit></div>
            <div className="flex w-[92px]"><Fit w={72.5} className={SYS}>Cadastrado em</Fit></div>
            <div className="flex w-[85px]"><Fit w={56} className={SYS}>Previsto em</Fit></div>
            <div className="flex w-[86.500px]"><Fit w={64} className={SYS}>Realizado em</Fit></div>
            <Fit w={42} className={SYS}>Situação</Fit>
          </div>
          <div className="pl-[21px]"><ExamTable /></div>
          <div className="flex items-center pt-px pl-[18px]">
            <Fit w={365.5} className={SYS}>* Duplo clique do mouse no campo desejado para trocar a ordem de exibição</Fit>
            <div className="ml-[13.500px]"><Check w={12} h={9} /></div>
            <Fit w={162} className={SYS + " ml-[5.500px]"}>Exame sem restrição de consulta.</Fit>
            <div className="mt-[3px] ml-[14px]"><S w={10} h={8}><path d="M1 2l3 .5L7 1l2 1-2 2 3 2-2 1.500-3-1L2 7.500l-1-1 2-2z" fill="#e61a14" /></S></div>
            <Fit w={162} className={SYS + " ml-[7px]"}>Exame com restrição de consulta.</Fit>
          </div>
        </div>
      </div>
    </section>
  );
}

function ErrorDialog() {
  return (
    <section className="absolute top-[376px] left-[638px] flex h-[123px] w-[331px] flex-col border border-t-[#eceae2] border-r-[#404040] border-b-[#404040] border-l-[#eceae2] bg-[#d0cfc8] p-[2px] shadow-[inset_-1px_-1px_0_#808080]">
      <div className="flex h-[15px] items-center justify-between bg-linear-to-r from-[#0c2670] to-[#a6caf0] pr-[2px] pl-px">
        <Fit w={93} className={VERD + " text-[10.500px] leading-none font-bold text-white"}>Oracle Forms 6.0</Fit>
        <WinBtn k="close" />
      </div>
      <div className="flex h-[68px] items-center gap-[9px] bg-[#fafdf9] pt-px pl-[19px]">
        <S w={32} h={25}>
          <path d="M16 2L30 23H2z" fill="#f6c40c" stroke="#a4a4a0" strokeWidth="2.500" strokeLinejoin="round" /><path d="M16 3l7 11H9z" fill="#f8e030" />
          <path d="M14.300 7.500h3.400l-.7 8h-2z" fill="#1c1c10" /><circle cx="16" cy="19" r="1.900" fill="#1c1c10" />
        </S>
        <Fit w={234} className={VERD + " text-[10.500px] leading-none text-[#181818]"}>ERROR: Failed to open file: ifrun60_dump_74016</Fit>
      </div>
      <div className="flex flex-1 items-start justify-end pt-[8px] pr-[8px]">
        <div className="flex h-[20px] w-[75px] items-center justify-center border border-black pr-[2px] shadow-[inset_1px_1px_0_#fff,inset_-2px_-2px_0_#777]"><Fit w={14} className={VERD + " text-[10px] leading-none text-black"}>OK</Fit></div>
      </div>
    </section>
  );
}

/* ---------- task bars ---------- */
const RAISED = "border border-t-white border-l-white border-r-[#666] border-b-[#666] shadow-[inset_-1px_-1px_0_#aaa]";
const PRESSED = "border border-t-[#666] border-l-[#666] border-r-white border-b-white shadow-[inset_1px_1px_0_#888] bg-[#fbfdfb]";

function RemoteTaskbar() {
  const t = "font-['Noto_Sans',sans-serif] text-[11px] leading-none text-[#181818]";
  return (
    <div className="flex h-[36px] items-start bg-[#f0f0f0] pt-[3px] pl-[2px]">
      <div className={RAISED + " flex h-[31px] w-[56px] items-center gap-[1px] pl-px"}><Flag /><Fit w={33} className="font-['Noto_Sans',sans-serif] text-[11px] leading-none font-bold">Iniciar</Fit></div>
      <div className={RAISED + " ml-[9px] flex h-[31px] w-[159px] items-center gap-[5px] pl-[3px]"}><HandIcon w={31} h={21} /><Fit w={113} className={t}>Assistência Remota ...</Fit></div>
      <div className={RAISED + " ml-[3px] flex h-[31px] w-[158px] items-center gap-[4px] pl-[3px]"}><AppIcon s={31} /><Fit w={113.5} className={t}>Sistema de Gerencia...</Fit></div>
      <div className={RAISED + " flex h-[31px] w-[158px] items-center gap-[4px] pl-[3px]"}>
        <S w={31} h={28}><path d="M22 4h8v22H17z" fill="#6060dc" /><path d="M1 3l3-2h19l-1 6 1 17-4 2H4z" fill="#86e8ea" stroke="#000" strokeWidth="1.800" /><path d="M6 5h6v5H6zM12 14h6v6h-6z" fill="#fff" stroke="#e0302c" strokeWidth="1.700" /><path d="M14 5h6M14 8h6M14 11h6M6 13h5" stroke="#2424a8" strokeWidth="1.500" /><circle cx="8.500" cy="21.500" r="6" fill="#f4f4ff" stroke="#1c1c88" strokeWidth="1.600" /><path d="M8.500 17.500v4l3 2" stroke="#1c1c88" fill="none" /></S>
        <Fit w={115} className={t}>Operação de Fundo ...</Fit>
      </div>
      <div className={PRESSED + " flex h-[31px] w-[158px] items-center gap-[5px] pl-[4px]"}><FormsIcon w={29} h={26} /><Fit w={111} className={t + " font-bold"}>Oracle Forms 6.0 - ...</Fit></div>
      <div className="ml-auto flex h-[31px] w-[182px] items-center border-t border-l border-[#999]">
        <div className="ml-[4px] w-[16px]"><Chevrons /></div><Net />
        <div className="ml-[9px]"><Speaker waves={1} /></div><div className="ml-[6px]"><FormsIconSmall /></div>
        <div className="ml-[12px] flex w-[58px] flex-col items-center gap-[4px]"><Fit w={27} className={t}>09:24</Fit><Fit w={57} className={t}>22/04/2018</Fit></div>
        <div className="ml-[7px]"><Monitor /></div>
      </div>
    </div>
  );
}

function HostTaskbar() {
  const cell = "flex h-[37px] w-[48px] shrink-0 items-center justify-center";
  return (
    <div className="flex h-[43px] items-start border-t border-white bg-[#f0f0f0] pt-[2px] pl-[2px]">
      <div className={RAISED + " flex h-[37px] w-[57px] items-center pl-px"}><Flag /><Fit w={35} className="font-['Noto_Sans',sans-serif] text-[12px] leading-none font-bold">Iniciar</Fit></div>
      <div className={cell + " ml-[9px]"}><S w={28} h={28}><path d="M8 1h19v25H8z" fill="#9cc8e4" stroke="#6c9cc0" /><path d="M5 1h18v25H5z" fill="#b8daf0" stroke="#6c9cc0" /><path d="M1 2h18v24H1z" fill="#8cc0e4" stroke="#5c90b8" /><circle cx="14" cy="14" r="10" fill="#ee7c1c" stroke="#fff" /><path d="M10.500 8l10 6-10 6z" fill="#fff" /></S></div>
      <div className={cell + " ml-[2px] " + RAISED}>
        <S w={30} h={30}><circle cx="15" cy="15" r="14.500" fill="#f8cc30" /><path d="M15 15L2.400 7.800A14.500 14.500 0 0 1 27.600 7.800z" fill="#da4434" /><path d="M15 .5a14.500 14.500 0 0 1 12.600 7.300L15 8z" fill="#da4434" /><path d="M2.400 7.800A14.500 14.500 0 0 0 14 29.500L21 18H9z" fill="#2c9c54" /><circle cx="15" cy="15" r="7" fill="#fff" /><circle cx="15" cy="15" r="5.300" fill="#4a84e8" /></S>
      </div>
      <div className={cell + " ml-[2px]"}><S w={32} h={30}><path d="M1 4l2-3h8l2 3h16v23H1z" fill="#f2dc88" stroke="#c0a040" /><path d="M5 2h4v3H5z" fill="#389c40" /><path d="M14 4h4v3h-4z" fill="#d04830" /><path d="M21 4h4v3h-4z" fill="#3888c8" /><path d="M2 9h26v17H2z" fill="#f8e8a4" /><path d="M6 29V17h20v12h-5v-7H11v7z" fill="#88c8ec" stroke="#4c94c4" /></S></div>
      <div className={cell + " ml-[2px] " + RAISED}>
        <S w={32} h={31}><path d="M27 17H10c0 8 9 9 12 4h5c-4 11-22 10-22-5C5 2 27 0 27 17z" fill="#58c0ec" stroke="#1c80c0" strokeWidth="1.200" /><path d="M10.500 13h11c-1-6-10-6-11 0z" fill="#f0f0f0" stroke="#1c80c0" /><path d="M3 29C-4 22 20-2 29 2c3 2 1 7 0 9 1-4 0-6-3-5C17 7 0 23 3 29z" fill="#f4c428" stroke="#d09c18" strokeWidth=".7" /></S>
      </div>
      <div className={cell + " ml-[2px]"}><S w={32} h={28}><path d="M2 6l13-6 4 13L7 19z" fill="#8cd468" /><path d="M7 9l12-5 4 14-12 4z" fill="#80b8e4" /><path d="M14 12l14-3 3 12-3 3-12 3z" fill="#f8e468" stroke="#dcc848" /></S></div>
      <div className={cell + " ml-[2px] justify-start border-r border-[#777]"}>
        <div className={RAISED + " flex h-[37px] w-[44px] items-center justify-center"}><S w={33} h={29}><rect x="1" y="2" width="31" height="20" rx="1.500" fill="#2c84c4" stroke="#1a5c94" /><circle cx="9" cy="10" r="4.500" fill="none" stroke="#bce4fc" strokeWidth="2" /><path d="M9 5.500v5h5" stroke="#f0b030" strokeWidth="2" fill="none" /><path d="M18 7h4v3h-4zM24 7h5v3h-5zM18 13h4v3h-4zM24 13h5v3h-5z" fill="#c4e8fc" /><circle cx="6" cy="18" r="1.500" fill="#f0b030" /><circle cx="11" cy="18" r="1.500" fill="#f0b030" /><ellipse cx="17" cy="24" rx="6" ry="4" fill="#dde4ea" stroke="#8090a0" /></S></div>
      </div>
      <div className={cell + " ml-[2px] " + RAISED}>
        <div className="flex h-[25px] w-[29px] flex-col border border-[#888] bg-black"><div className="h-[3px] bg-[#ddd]" /><span className="pl-[2px] font-['Liberation_Mono',monospace] text-[8px] leading-[11px] text-white">C:\_</span></div>
      </div>
      <div className={cell + " ml-[2px] " + PRESSED}><HandIcon w={32} h={22} /></div>
      <div className={cell + " ml-[2px] " + RAISED}><S w={32} h={30}><path d="M10 3l19 1 1 19-3 5-25-4z" fill="#6cb0c6" stroke="#4c8494" /><path d="M11 3l17 1-7 20-19-1z" fill="#a8d6e6" stroke="#80b0c0" /><path d="M11 3h18" stroke="#556" strokeWidth="2" strokeDasharray="1.500 1.500" /><path d="M30 6v17l-4 5" stroke="#444" fill="none" strokeWidth="1.500" /></S></div>
      <div className={cell + " ml-[2px] " + RAISED}><S w={32} h={31}><path d="M3 20C-1 9 13 3 21 7c7 4 7 12 3 17-4 4-8 1-10-1s-8 4-11-3z" fill="#b4d8ec" stroke="#6c9cbc" /><circle cx="8" cy="14" r="2.500" fill="#d84434" /><circle cx="14" cy="10" r="2.500" fill="#44a844" /><circle cx="20" cy="10" r="2.500" fill="#f0b828" /><circle cx="8" cy="20" r="2.200" fill="#7850b8" /><path d="M29 3l-8 25" stroke="#d09440" strokeWidth="2.500" /><path d="M26 8l1-7 4 2-2 6z" fill="#b47838" /></S></div>
      <div className="ml-auto flex h-[37px] w-[187px] items-center border-t border-l border-[#999]">
        <div className="ml-[5px] w-[16px]"><Chevrons /></div>
        <S w={18} h={17}><path d="M2.500 1v15" stroke="#888" strokeWidth="1.500" /><path d="M3 2c4-2 6 2 11 0v8c-4 2-7-1-11 0z" fill="#f6f6f6" stroke="#999" /><circle cx="12.500" cy="12" r="4.800" fill="#d83024" stroke="#f0c0bc" /><path d="M10.500 10l4 4M14.500 10l-4 4" stroke="#fff" strokeWidth="1.300" /></S>
        <div className="ml-[7px]"><Net /></div><div className="ml-[7px]"><Speaker waves={2} /></div>
        <div className="ml-[12px] flex w-[59px] flex-col items-center gap-[5px]"><Fit w={27} className={SEG}>09:24</Fit><Fit w={58} className={SEG}>22/04/2018</Fit></div>
        <div className="ml-[6px]"><Monitor /></div>
      </div>
    </div>
  );
}

export default function App() {
  return (
    <div className="relative flex h-[900px] w-[1600px] flex-col overflow-hidden bg-[#f0f0f0]">
      <OuterTop />
      <main className="ml-[7px] flex w-[1586px] flex-col">
        <div className="flex h-[763px] flex-col border-r border-black">
          <div className="flex h-[15px] shrink-0 items-center justify-between bg-linear-to-r from-[#7b7b7b] to-[#bbbfbb] pr-px pl-[2px]">
            <div className="flex items-center gap-[2px]"><AppIcon s={15} /><Fit w={612} className={VERD + " text-[10.500px] leading-none font-bold text-[#d4d2ca]"}>Sistema de Gerenciamento de Unidade - [Prescrição Médica - ###012345678901234567890123456789###]</Fit></div>
            <div className="flex"><WinBtn k="min" /><WinBtn k="restore" /><div className="ml-[3px]"><WinBtn k="close" /></div></div>
          </div>
          <div className="flex h-[17px] shrink-0 items-center bg-[#d0cfc6] pt-px pl-[5.500px]">
            {MENU.map(([t, w, m]) => (
              <div key={t} className="flex items-center"><Fit w={w} className={VERD + " text-[10px] leading-none text-[#85857f]"}>{t}</Fit><svg width={m} height="1" /></div>
            ))}
          </div>
          <div className="flex h-[29px] shrink-0 items-center border-b-2 border-[#333] bg-[#c0c0c0] pl-[20px]"><div className="opacity-70"><ToolStrip /></div></div>
          <div className="h-[638px] shrink-0 bg-[#c0c0c0]"><RecordBar /><BackPanels /></div>
          <StatusBar />
          <RemoteTaskbar />
        </div>
        <div className="mt-px flex h-px"><div className="w-[442px] bg-black" /><div className="ml-[23px] w-[1118px] bg-black" /></div>
      </main>
      <div className="mt-[9px] flex h-[25px] items-center gap-[4px] border-t border-l border-[#999] pl-px">
        <S w={16} h={16}><circle cx="8" cy="8" r="7" fill="#1c9418" stroke="#8a8a8a" strokeWidth="1.500" /><ellipse cx="8" cy="5.500" rx="4" ry="3" fill="#5cd04c" opacity=".7" /></S>
        <Fit w={230} className={SEG}>Compartilhando o controle do computador</Fit>
      </div>
      <div className="mt-auto"><HostTaskbar /></div>
      <HistoryWindow />
      <ErrorDialog />
      <div className="absolute top-[317px] left-[491px]"><S w={9} h={16}><path d="M1 1h2.500l1 1 1-1H8M1 15h2.500l1-1 1 1H8M4.500 2v12" fill="none" stroke="#333" strokeWidth="1.200" /></S></div>
    </div>
  );
}
